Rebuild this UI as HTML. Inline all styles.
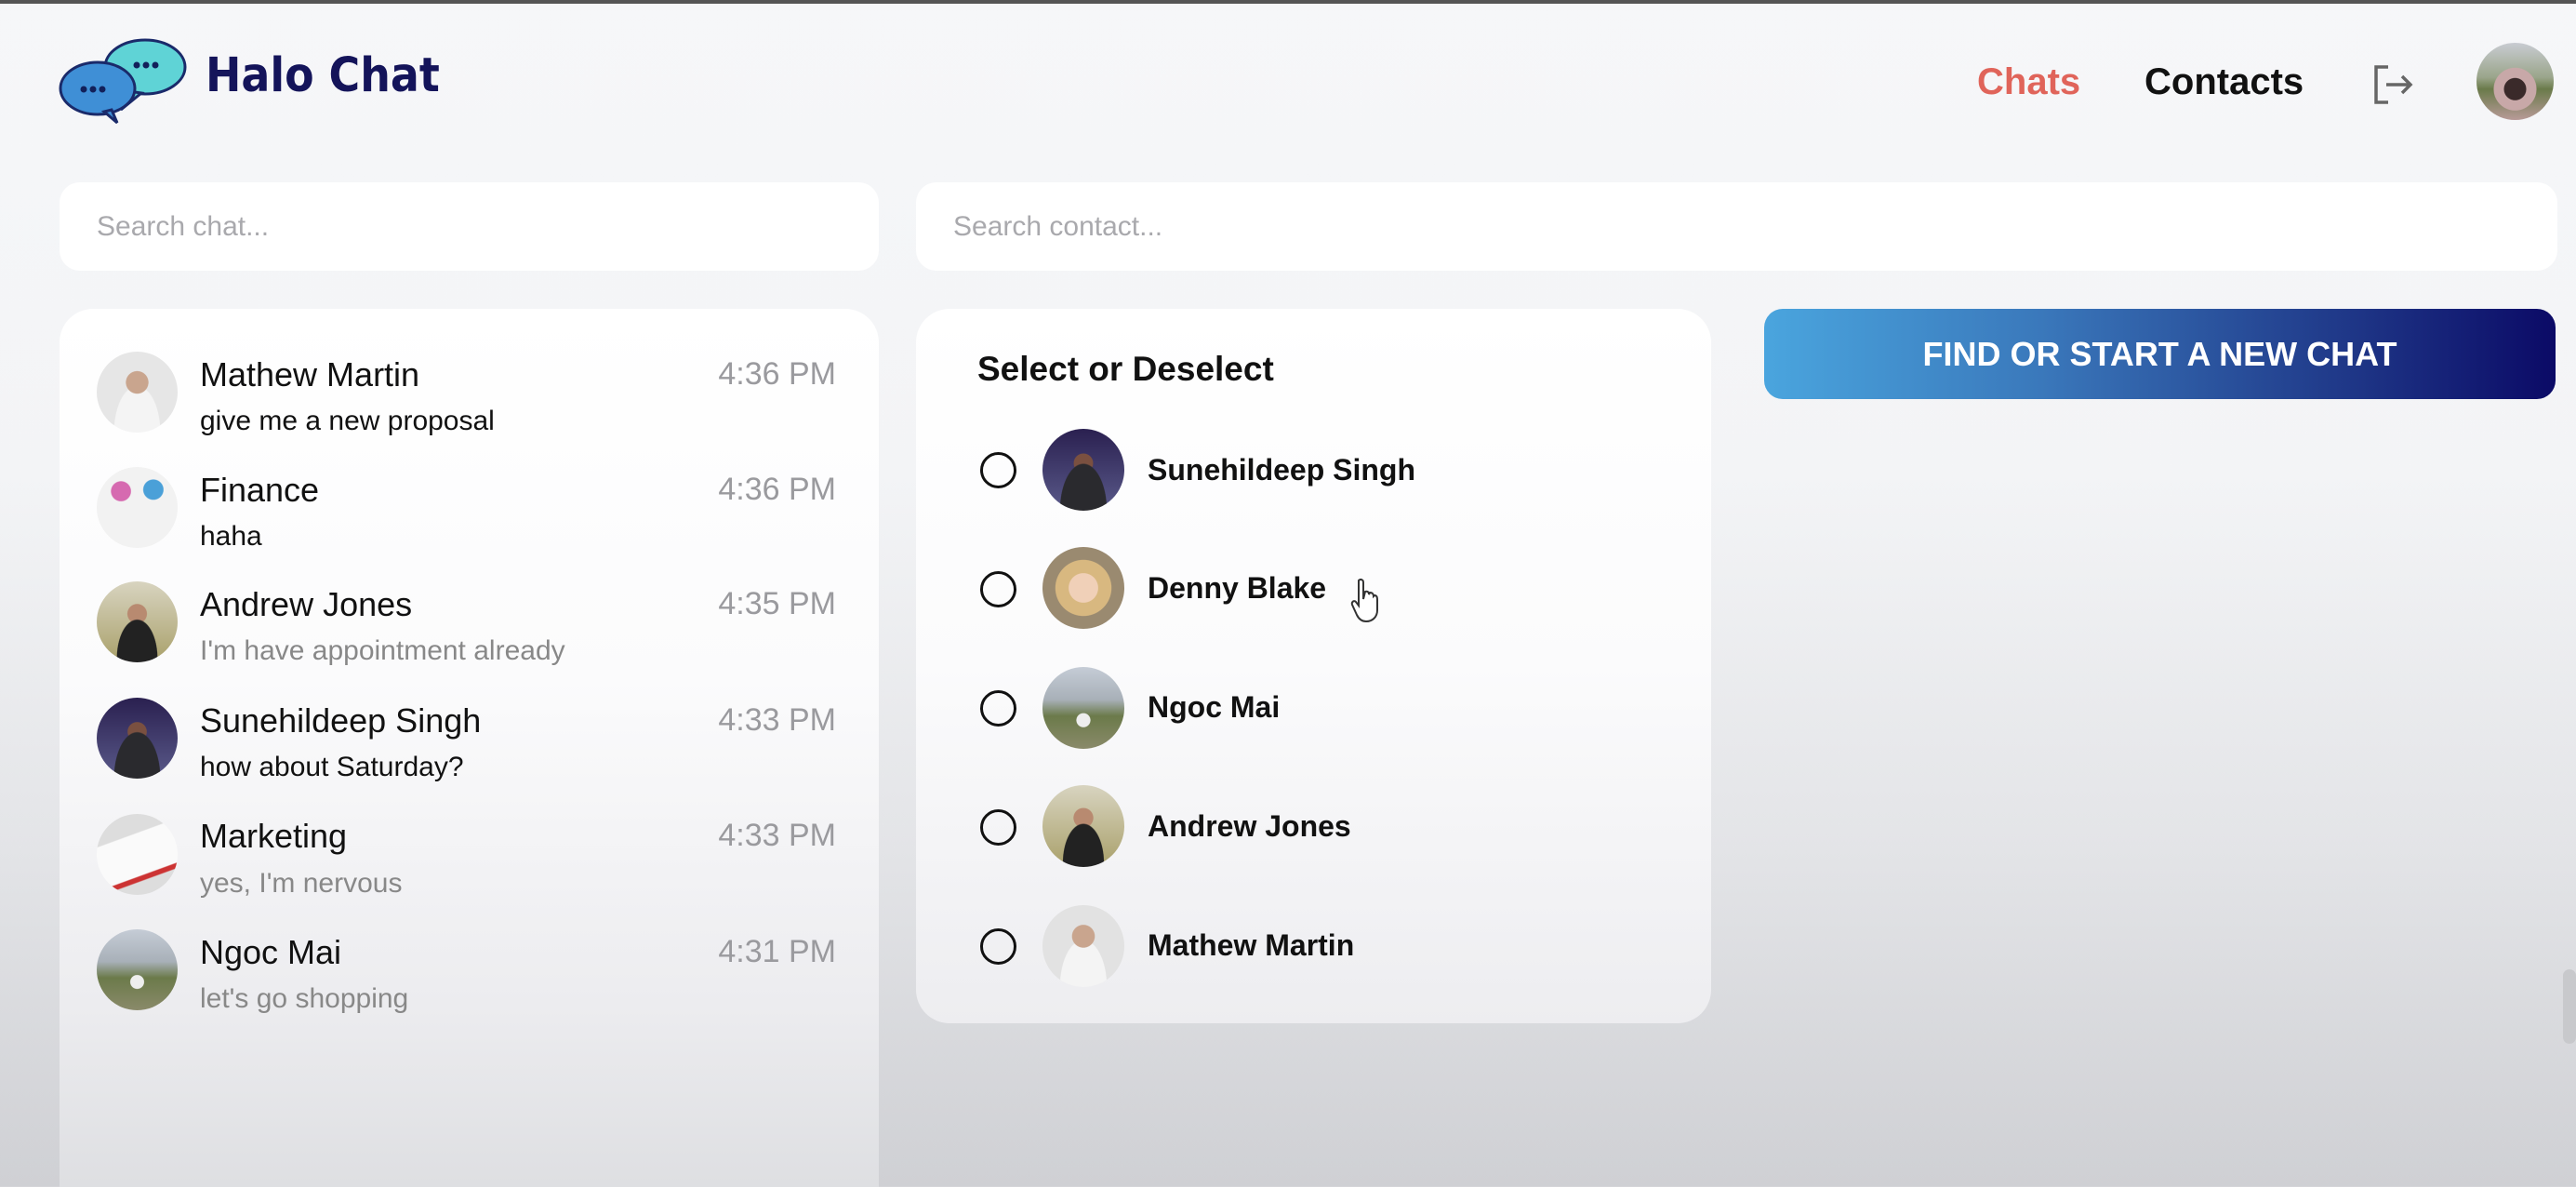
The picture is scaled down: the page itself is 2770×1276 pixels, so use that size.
<!DOCTYPE html>
<html><head><meta charset="utf-8"><style>
*{margin:0;padding:0;box-sizing:border-box}
html,body{width:2770px;height:1276px;overflow:hidden}
body{font-family:"Liberation Sans",sans-serif;background:linear-gradient(#f6f7f9 0%,#f3f4f6 40%,#e4e5e8 70%,#cfd0d4 100%);position:relative}
.a{position:absolute}
.topline{left:0;top:0;width:2770px;height:4px;background:#555}
.logo-t{left:221px;top:52px;font-size:51px;font-weight:bold;color:#14145a;letter-spacing:0;font-family:"DejaVu Sans Condensed","DejaVu Sans",sans-serif}
.nav{font-size:40px;font-weight:bold;top:66px}
.search{background:#fff;border-radius:22px;height:95px;top:196px;font-size:30px;color:#a9a9ad;padding-left:40px;line-height:95px}
.panel{border-radius:36px;background:linear-gradient(#fff 0%,#fbfbfc 40%,#ececef 75%,#dadbde 100%)}
.av{border-radius:50%;width:87px;height:87px}
.name{font-size:36px;color:#111}
.msg{font-size:30px}
.time{font-size:34px;color:#9a9a9e;right:1871px;text-align:right}
.radio{width:39px;height:39px;border:3.5px solid #111;border-radius:50%}
.cname{font-size:32px;font-weight:600;color:#111}
</style></head><body>
<div class="a topline"></div>
<svg class="a" style="left:60px;top:40px" width="150" height="95" viewBox="0 0 150 95">
<ellipse cx="96" cy="32" rx="43" ry="29" fill="#5fd3d6" stroke="#1a2a6a" stroke-width="3"/>
<path d="M78 58 L70 78 L92 60 Z" fill="#5fd3d6" stroke="#1a2a6a" stroke-width="3"/>
<ellipse cx="45" cy="55" rx="40" ry="28" fill="#3f8fd6" stroke="#1a2a6a" stroke-width="3"/>
<path d="M52 80 L66 92 L60 78 Z" fill="#3f8fd6" stroke="#1a2a6a" stroke-width="3"/>
<circle cx="30" cy="56" r="3.5" fill="#12205a"/><circle cx="40" cy="56" r="3.5" fill="#12205a"/><circle cx="50" cy="56" r="3.5" fill="#12205a"/>
<circle cx="87" cy="30" r="3.5" fill="#12205a"/><circle cx="97" cy="30" r="3.5" fill="#12205a"/><circle cx="107" cy="30" r="3.5" fill="#12205a"/>
</svg>
<div class="a logo-t">Halo Chat</div>
<div class="a nav" style="left:2126px;color:#e0645a">Chats</div>
<div class="a nav" style="left:2306px;color:#111">Contacts</div>
<svg class="a" style="left:2550px;top:68px" width="46" height="46" viewBox="0 0 46 46" fill="none" stroke="#666" stroke-width="3.5"><path d="M18 4H5V42H18"/><path d="M16 23H42M33 14L42 23L33 32"/></svg>
<div class="a" style="left:2663px;top:46px;width:83px;height:83px;border-radius:50%;background:radial-gradient(circle at 50% 60%,#3a2a2a 0 18%,#c8a8a8 19% 35%,transparent 36%),linear-gradient(#c9ccd2 0%,#9aa58a 45%,#6a7a4a 60%,#b89a98 100%)"></div>

<div class="a search" style="left:64px;width:881px">Search chat...</div>
<div class="a search" style="left:985px;width:1765px">Search contact...</div>

<div class="a panel" style="left:64px;top:332px;width:881px;height:1000px"></div>
<div class="a panel" style="left:985px;top:332px;width:855px;height:768px;background:linear-gradient(#fff 0%,#fbfbfc 50%,#ededf0 100%)"></div>

<div class="a" style="left:1897px;top:332px;width:851px;height:97px;border-radius:20px;background:linear-gradient(90deg,#4aa5de 0%,#3a78bb 35%,#1e3586 75%,#0b0a66 100%);color:#fff;font-weight:bold;font-size:36px;text-align:center;line-height:97px">FIND OR START A NEW CHAT</div>

<!-- chat items -->
<div class="a av" style="left:104px;top:378px;background:radial-gradient(circle at 50% 38%,#c9a58e 0 17%,transparent 18%),radial-gradient(ellipse at 50% 100%,#f4f4f4 0 40%,transparent 41%),#e6e6e6"></div>
<div class="a name" style="left:215px;top:382px">Mathew Martin</div>
<div class="a msg" style="left:215px;top:436px;color:#111">give me a new proposal</div>
<div class="a time" style="top:383px">4:36 PM</div>

<div class="a av" style="left:104px;top:502px;background:radial-gradient(circle at 30% 30%,#d66ab0 0 12%,transparent 13%),radial-gradient(circle at 70% 28%,#4aa0d8 0 12%,transparent 13%),#f2f2f2"></div>
<div class="a name" style="left:215px;top:506px">Finance</div>
<div class="a msg" style="left:215px;top:560px;color:#111">haha</div>
<div class="a time" style="top:507px">4:36 PM</div>

<div class="a av" style="left:104px;top:625px;background:radial-gradient(ellipse at 50% 95%,#222 0 35%,transparent 36%),radial-gradient(circle at 50% 40%,#b88a70 0 15%,transparent 16%),linear-gradient(#d8d4c0,#a9a06a)"></div>
<div class="a name" style="left:215px;top:629px">Andrew Jones</div>
<div class="a msg" style="left:215px;top:683px;color:#888">I'm have appointment already</div>
<div class="a time" style="top:630px">4:35 PM</div>

<div class="a av" style="left:104px;top:750px;background:radial-gradient(ellipse at 50% 100%,#2a2a2e 0 40%,transparent 41%),radial-gradient(circle at 50% 42%,#7a5040 0 15%,transparent 16%),linear-gradient(#2a2050,#5a5a8a)"></div>
<div class="a name" style="left:215px;top:754px">Sunehildeep Singh</div>
<div class="a msg" style="left:215px;top:808px;color:#111">how about Saturday?</div>
<div class="a time" style="top:755px">4:33 PM</div>

<div class="a av" style="left:104px;top:875px;background:linear-gradient(160deg,#ddd 0 30%,#fafafa 31% 70%,#c33 71% 75%,#ddd 76%)"></div>
<div class="a name" style="left:215px;top:878px">Marketing</div>
<div class="a msg" style="left:215px;top:933px;color:#888">yes, I'm nervous</div>
<div class="a time" style="top:879px">4:33 PM</div>

<div class="a av" style="left:104px;top:999px;background:radial-gradient(circle at 50% 65%,#eee 0 10%,transparent 11%),linear-gradient(#c5ccd6 0%,#a8b0b8 40%,#6b7a4a 60%,#8a8a6a 100%)"></div>
<div class="a name" style="left:215px;top:1003px">Ngoc Mai</div>
<div class="a msg" style="left:215px;top:1057px;color:#888">let's go shopping</div>
<div class="a time" style="top:1004px">4:31 PM</div>

<!-- contacts -->
<div class="a" style="left:1051px;top:376px;font-size:37px;font-weight:bold;color:#111">Select or Deselect</div>

<div class="a radio" style="left:1054px;top:486px"></div>
<div class="a av" style="left:1121px;top:461px;width:88px;height:88px;background:radial-gradient(ellipse at 50% 100%,#2a2a2e 0 40%,transparent 41%),radial-gradient(circle at 50% 42%,#7a5040 0 15%,transparent 16%),linear-gradient(#2a2050,#5a5a8a)"></div>
<div class="a cname" style="left:1234px;top:487px">Sunehildeep Singh</div>

<div class="a radio" style="left:1054px;top:614px"></div>
<div class="a av" style="left:1121px;top:588px;width:88px;height:88px;background:radial-gradient(circle at 50% 50%,#f0d0b8 0 25%,transparent 26%),radial-gradient(circle at 50% 50%,#d8b880 0 48%,#9a8a70 49%)"></div>
<div class="a cname" style="left:1234px;top:614px">Denny Blake</div>
<svg class="a" style="left:1452px;top:620px" width="34" height="52" viewBox="0 0 34 52" fill="#fff" stroke="#333" stroke-width="2"><path d="M9 4c2-2 5-1 5 2v18l2-8c3-1 4 1 4 3l1-2c3 0 4 2 4 4l1-1c3 0 3 3 3 5v11c0 7-5 12-12 12-5 0-8-3-10-7L2 30c-1-3 2-5 4-3l3 4Z"/></svg>

<div class="a radio" style="left:1054px;top:742px"></div>
<div class="a av" style="left:1121px;top:717px;width:88px;height:88px;background:radial-gradient(circle at 50% 65%,#eee 0 10%,transparent 11%),linear-gradient(#c5ccd6 0%,#a8b0b8 40%,#6b7a4a 60%,#8a8a6a 100%)"></div>
<div class="a cname" style="left:1234px;top:742px">Ngoc Mai</div>

<div class="a radio" style="left:1054px;top:870px"></div>
<div class="a av" style="left:1121px;top:844px;width:88px;height:88px;background:radial-gradient(ellipse at 50% 95%,#222 0 35%,transparent 36%),radial-gradient(circle at 50% 40%,#b88a70 0 15%,transparent 16%),linear-gradient(#d8d4c0,#a9a06a)"></div>
<div class="a cname" style="left:1234px;top:870px">Andrew Jones</div>

<div class="a radio" style="left:1054px;top:998px"></div>
<div class="a av" style="left:1121px;top:973px;width:88px;height:88px;background:radial-gradient(circle at 50% 38%,#c9a58e 0 17%,transparent 18%),radial-gradient(ellipse at 50% 100%,#f4f4f4 0 40%,transparent 41%),#e2e2e2"></div>
<div class="a cname" style="left:1234px;top:998px">Mathew Martin</div>

<div class="a" style="left:2756px;top:1042px;width:14px;height:80px;border-radius:7px;background:#c8c9cc"></div>
</body></html>
